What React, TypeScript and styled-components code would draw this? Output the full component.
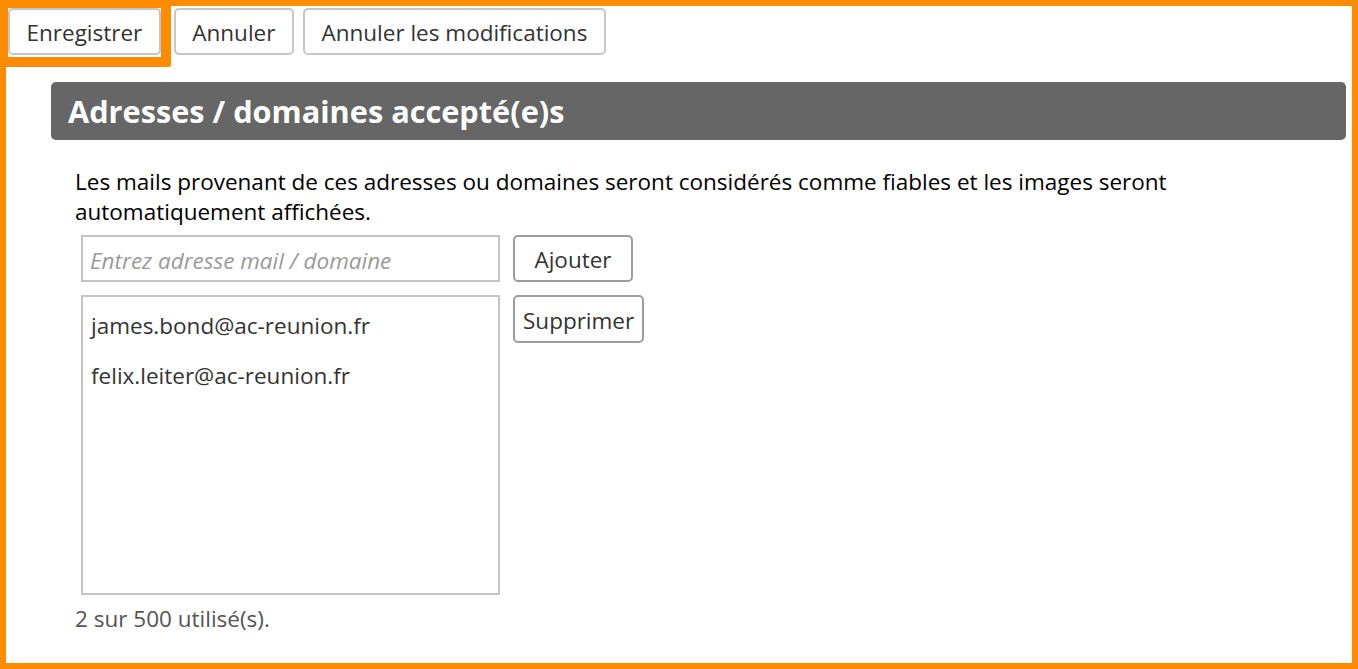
import React from "react";
import styled, { createGlobalStyle } from "styled-components";

const GlobalStyle = createGlobalStyle`
  html, body {
    margin: 0;
    padding: 0;
    background: #ffffff;
  }
  body {
    font-family: "Open Sans", "Noto Sans", sans-serif;
    font-size: 22.5px;
    color: #000;
  }
  * { box-sizing: border-box; }
`;

const Frame = styled.div`
  width: 1358px;
  height: 669px;
  border: 6px solid #ff8c00;
  overflow: hidden;
  display: flex;
  flex-direction: column;
`;

const Toolbar = styled.div`
  display: flex;
  align-items: center;
  gap: 9px;
  padding: 2px 2px 0;
`;

const ToolButton = styled.button<{ $focused?: boolean }>`
  position: relative;
  height: 47px;
  padding: 4px 16.5px 0;
  border: 2px solid #c6c6c6;
  border-radius: 5px;
  background: #fff;
  color: #333;
  font-family: inherit;
  font-size: 22.5px;
  line-height: 1;
  cursor: pointer;
  margin-right: ${(p) => (p.$focused ? "4px" : "0")};

  &::after {
    content: "";
    display: ${(p) => (p.$focused ? "block" : "none")};
    position: absolute;
    left: -8px;
    top: -8px;
    right: -12px;
    bottom: -14px;
    border-style: solid;
    border-color: #ff8c00;
    border-width: 6px 10px 10px 6px;
    border-radius: 0 0 2px 0;
    pointer-events: none;
  }
`;

const Section = styled.section`
  margin: 27px 6px 0 45px;
  display: flex;
  flex-direction: column;
`;

const Header = styled.h2`
  margin: 0;
  height: 58px;
  display: flex;
  align-items: center;
  padding: 1px 17px 0;
  background: #666666;
  border-radius: 5px;
  color: #fff;
  font-size: 30.7px;
  font-weight: 700;
  line-height: 1;
`;

const Body = styled.div`
  padding: 0 24px;
  display: flex;
  flex-direction: column;
`;

const Description = styled.p`
  margin: 27px 0 0;
  font-size: 22.5px;
  line-height: 30px;
  color: #000;
`;

const EditorRow = styled.div<{ $top: number }>`
  display: flex;
  align-items: flex-start;
  gap: 13px;
  margin-left: 6px;
  margin-top: ${(p) => p.$top}px;
`;

const TextInput = styled.input`
  width: 419px;
  height: 47px;
  border: 2px solid #c4c4c4;
  border-radius: 0;
  padding: 3px 7px 0;
  font-family: inherit;
  font-size: 22.5px;
  color: #333;
  outline: none;
  &::placeholder {
    color: #9a9a9a;
    font-style: italic;
  }
`;

const ActionButton = styled.button<{ $minWidth?: number; $h?: number }>`
  height: ${(p) => p.$h ?? 47}px;
  min-width: ${(p) => p.$minWidth ?? 0}px;
  padding: 4px 8px 0;
  border: 2px solid #9d9d9d;
  border-radius: 5px;
  background: #fff;
  color: #333;
  font-family: inherit;
  font-size: 22.5px;
  line-height: 1;
  cursor: pointer;
`;

const ListBox = styled.ul`
  width: 419px;
  height: 300px;
  margin: 0;
  padding: 4px 8px;
  list-style: none;
  border: 2px solid #c4c4c4;
  overflow: auto;
`;

const ListItem = styled.li`
  height: 50px;
  line-height: 50px;
  font-size: 22.5px;
  color: #333;
  white-space: nowrap;
`;

const Counter = styled.p`
  margin: 9px 0 0;
  font-size: 22.5px;
  line-height: 30px;
  color: #555;
`;

const addresses = ["james.bond@ac-reunion.fr", "felix.leiter@ac-reunion.fr"];

export default function App() {
  return (
    <>
      <GlobalStyle />
      <Frame>
        <Toolbar>
          <ToolButton $focused>Enregistrer</ToolButton>
          <ToolButton>Annuler</ToolButton>
          <ToolButton>Annuler les modifications</ToolButton>
        </Toolbar>
        <Section>
          <Header>Adresses / domaines accepté(e)s</Header>
          <Body>
            <Description>
              Les mails provenant de ces adresses ou domaines seront considérés comme fiables et
              les images seront automatiquement affichées.
            </Description>
            <EditorRow $top={8}>
              <TextInput placeholder="Entrez adresse mail / domaine" />
              <ActionButton $minWidth={120}>Ajouter</ActionButton>
            </EditorRow>
            <EditorRow $top={13}>
              <ListBox>
                {addresses.map((a) => (
                  <ListItem key={a}>{a}</ListItem>
                ))}
              </ListBox>
              <ActionButton $h={48}>Supprimer</ActionButton>
            </EditorRow>
            <Counter>
              {addresses.length} sur 500 utilisé(s).
            </Counter>
          </Body>
        </Section>
      </Frame>
    </>
  );
}
